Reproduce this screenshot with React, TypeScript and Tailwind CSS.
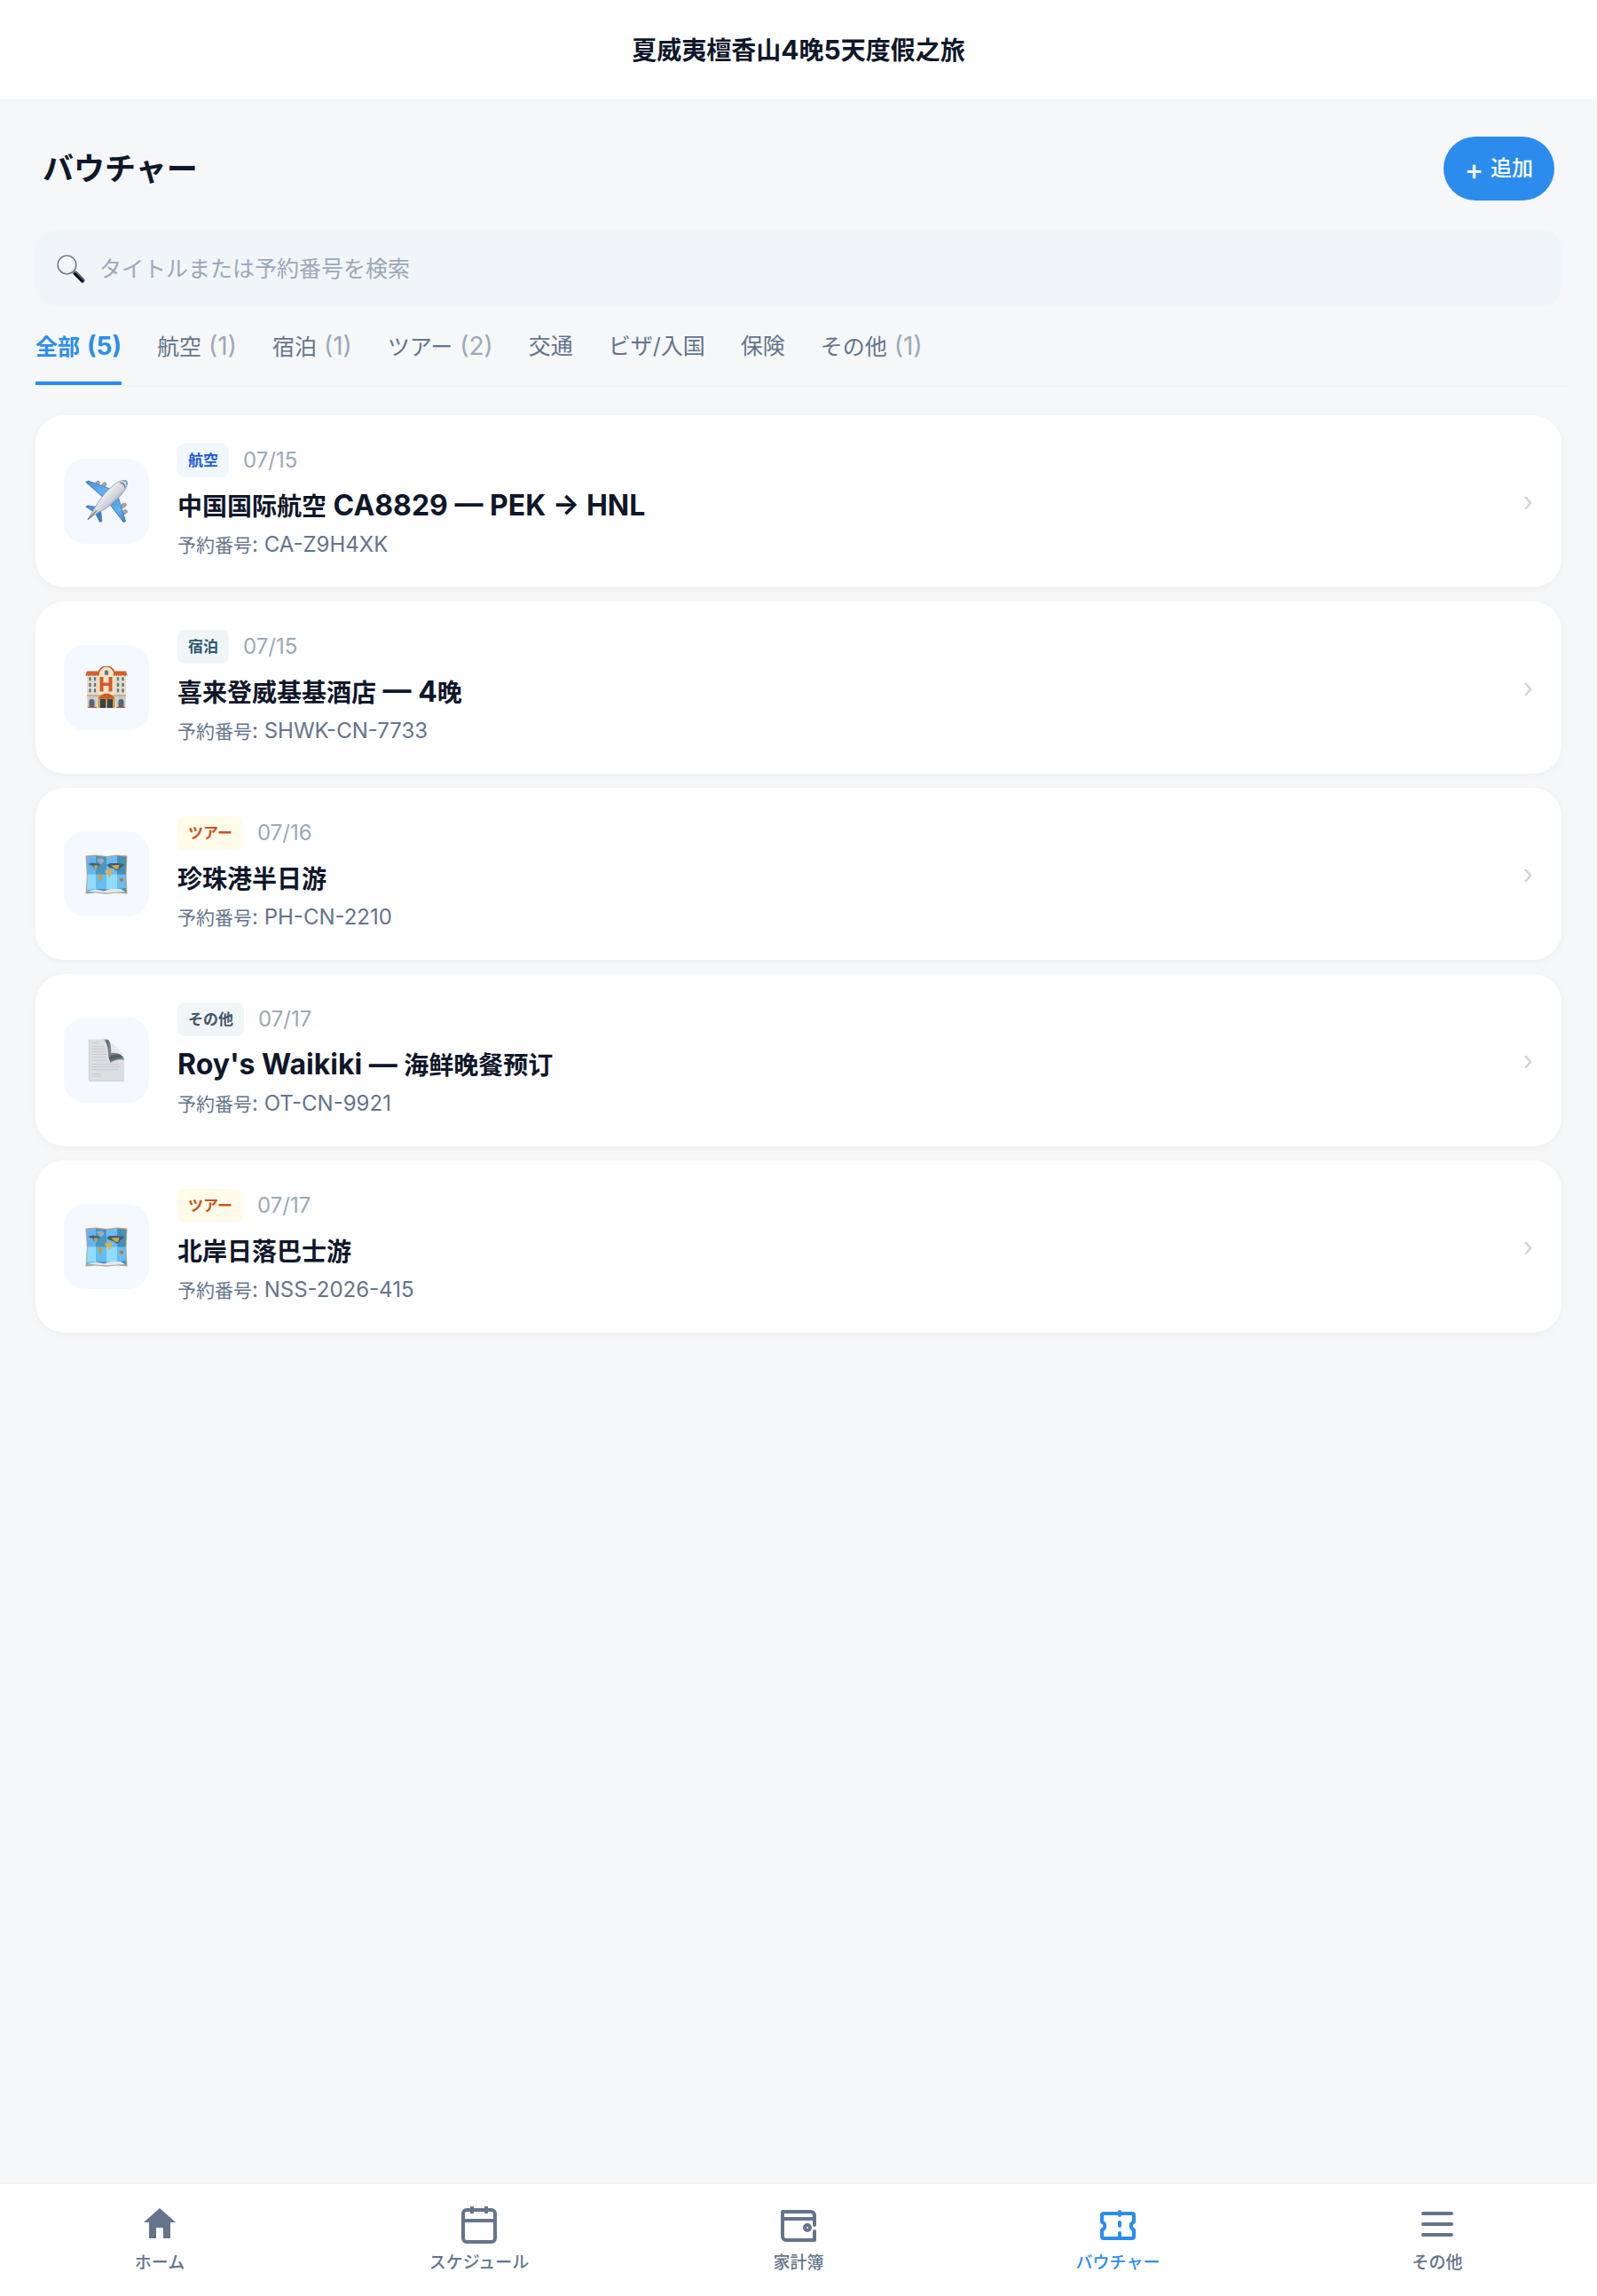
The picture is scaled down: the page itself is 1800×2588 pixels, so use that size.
import { useState } from 'react';
import type { ReactNode } from 'react';
import { clsx } from 'clsx';

type Category = 'flight' | 'stay' | 'tour' | 'other';

const TABS = [
  { id: 'all', label: '全部', count: 5 },
  { id: 'flight', label: '航空', count: 1 },
  { id: 'stay', label: '宿泊', count: 1 },
  { id: 'tour', label: 'ツアー', count: 2 },
  { id: 'transport', label: '交通', count: 0 },
  { id: 'visa', label: 'ビザ/入国', count: 0 },
  { id: 'insurance', label: '保険', count: 0 },
  { id: 'other', label: 'その他', count: 1 },
];

const VOUCHERS: { id: number; category: Category; date: string; title: string; code: string }[] = [
  { id: 1, category: 'flight', date: '07/15', title: '中国国际航空 CA8829 — PEK → HNL', code: 'CA-Z9H4XK' },
  { id: 2, category: 'stay', date: '07/15', title: '喜来登威基基酒店 — 4晚', code: 'SHWK-CN-7733' },
  { id: 3, category: 'tour', date: '07/16', title: '珍珠港半日游', code: 'PH-CN-2210' },
  { id: 4, category: 'other', date: '07/17', title: "Roy's Waikiki — 海鲜晚餐预订", code: 'OT-CN-9921' },
  { id: 5, category: 'tour', date: '07/17', title: '北岸日落巴士游', code: 'NSS-2026-415' },
];

const CATEGORY: Record<Category, { label: string; badge: string; icon: ReactNode }> = {
  flight: { label: '航空', badge: 'bg-[#f0f7fd] text-[#1a56db]', icon: <PlaneIcon /> },
  stay: { label: '宿泊', badge: 'bg-[#f0f6f8] text-[#2b5a70]', icon: <HotelIcon /> },
  tour: { label: 'ツアー', badge: 'bg-[#fefbe9] text-[#c8541c]', icon: <MapIcon /> },
  other: { label: 'その他', badge: 'bg-[#f0f6f8] text-[#475569]', icon: <DocIcon /> },
};

// Latin runs are set a little larger than the Han characters beside them
function MixedText({ text, latin }: { text: string; latin: string }) {
  return text.split(/([\u4e00-\u9fff]+)/).map((part, i) =>
    i % 2 === 0 ? (
      <span key={i} className={latin}>
        {part}
      </span>
    ) : (
      part
    ),
  );
}

function SearchGlyph() {
  return (
    <svg viewBox="0 0 32 32" className="size-8 shrink-0" aria-hidden="true">
      <defs>
        <linearGradient id="handle" x1="0" y1="1" x2="1" y2="0">
          <stop offset="0.3" stopColor="#0b1220" />
          <stop offset="0.55" stopColor="#8b97a3" />
          <stop offset="0.75" stopColor="#1f2937" />
        </linearGradient>
      </defs>
      <path d="M18 18l3 3" stroke="#6b7280" strokeWidth="2" />
      <path d="M21 21l8 8" stroke="url(#handle)" strokeWidth="5" strokeLinecap="round" />
      <path d="M20.5 21.5l8.5 8.5" stroke="#0b1220" strokeWidth="3" strokeLinecap="round" />
      <circle cx="11.5" cy="11.5" r="10.4" fill="#eceef2" stroke="#6b7684" strokeWidth="1.4" />
      <circle cx="11" cy="10.5" r="8" fill="#f7f7f9" opacity="0.8" />
    </svg>
  );
}

function PlaneIcon() {
  return (
    <svg viewBox="0 0 48 48" className="size-12" aria-hidden="true">
      <defs>
        <linearGradient id="fuselage" x1="0" y1="0" x2="1" y2="1">
          <stop offset="0.3" stopColor="#fbfbfd" />
          <stop offset="0.55" stopColor="#cfd0d8" />
          <stop offset="0.7" stopColor="#85868f" />
        </linearGradient>
        <linearGradient id="wing" x1="0" y1="0" x2="1" y2="1">
          <stop offset="0" stopColor="#3f8fdc" />
          <stop offset="0.6" stopColor="#5db3f7" />
          <stop offset="1" stopColor="#2b7fd0" />
        </linearGradient>
      </defs>
      <g fill="#a5a8b3" stroke="#6d717d" strokeWidth="0.6">
        <rect x="11.5" y="1" width="4" height="7" rx="1.6" transform="rotate(35 13.5 4.5)" />
        <rect x="19" y="2.5" width="4" height="7" rx="1.6" transform="rotate(35 21 6)" />
        <rect x="41" y="25.5" width="4" height="7" rx="1.6" transform="rotate(55 43 29)" />
        <rect x="42" y="33" width="4" height="7" rx="1.6" transform="rotate(55 44 36.5)" />
      </g>
      <path d="M0.7 2.4 3.5 1 31 11 24 23Z" fill="url(#wing)" stroke="#596b80" strokeWidth="0.8" />
      <path d="M45.6 46.5 43 47.5 25 24 36.5 17Z" fill="url(#wing)" stroke="#596b80" strokeWidth="0.8" />
      <path d="M0.8 30 3 28.8 15.5 31 11 37Z" fill="#3f95e6" stroke="#596b80" strokeWidth="0.8" />
      <path d="M18.8 46.6 16.5 47.4 11.5 37.5 17.5 33Z" fill="#2f83d6" stroke="#596b80" strokeWidth="0.8" />
      <path
        d="M3 44.5 10 33C17 20 26 9 37.5 2.2 41 .2 45.5 0 47 1.3 48.2 3 47.3 7 45.2 10.5 38 21.5 26.5 31.5 14.5 36.8Z"
        fill="url(#fuselage)"
        stroke="#8c8e99"
        strokeWidth="0.8"
      />
      <path d="M39.5 3.2C42.5 3 45 5.5 44.8 8.5" fill="none" stroke="#5a6b80" strokeWidth="1.4" />
      <path d="M43.5 1.2C46 .6 47.6 2.5 46.8 5.5" fill="none" stroke="#4a9be8" strokeWidth="1.2" />
      <path d="M3 44.5 13 34.5" stroke="#777b86" strokeWidth="1.2" />
    </svg>
  );
}

function HotelIcon() {
  return (
    <svg viewBox="0 0 48 48" className="size-12" aria-hidden="true">
      <rect x="2" y="8" width="44" height="39" fill="#ecd9bd" />
      <path d="M15 47V9a8.5 8.5 0 0 1 18 0v38Z" fill="#f3e3c8" />
      <path d="M15 9a8.7 8.7 0 0 1 18 0" fill="none" stroke="#c9582a" strokeWidth="1.6" />
      <path d="M2 5.5h14v4.5H.5Z" fill="#d5602c" />
      <path d="M46 5.5H32v4.5h15.5Z" fill="#d5602c" />
      <path d="M.5 10.3H16M32 10.3h15.5" stroke="#8f3f1f" strokeWidth="0.8" strokeDasharray="1.5 1" />
      <rect x="22" y="4.5" width="4" height="5.5" rx="1.5" fill="#49768f" stroke="#c9a26a" strokeWidth="0.6" />
      <path d="M16.5 12h4v6.5h6V12h4v16.5h-4v-6.5h-6v6.5h-4Z" fill="#cf5a2a" />
      <g fill="#4d7c96" stroke="#faf1e2" strokeWidth="0.5">
        {[12, 18.5, 25].map((y) =>
          [4, 9.5, 35.5, 41].map((x) => <rect key={`${x}-${y}`} x={x} y={y} width="3" height="4.8" />),
        )}
      </g>
      <path d="M2 33h44" stroke="#b9a68d" strokeWidth="1.4" />
      <rect x="3" y="34" width="10" height="12" fill="#c7ccd2" />
      <rect x="35" y="34" width="10" height="12" fill="#c7ccd2" />
      <path d="M4.5 46v-6a3 3 0 0 1 6 0v6ZM37.5 46v-6a3 3 0 0 1 6 0v6Z" fill="#536877" />
      <rect x="14.5" y="34" width="19" height="13" fill="#c79b43" />
      <rect x="17" y="37" width="6" height="10" fill="#344552" />
      <rect x="25" y="37" width="6" height="10" fill="#344552" />
      <path d="M15.5 36.5c1-4 5-5.7 8.5-5.7s7.5 1.7 8.5 5.7Z" fill="#cf5a2a" />
      <path d="M3 46.5h10M35 46.5h10" stroke="#c9582a" strokeWidth="1.2" />
    </svg>
  );
}

function MapIcon() {
  return (
    <svg viewBox="0 0 48 48" className="size-12" aria-hidden="true">
      <path d="M0.5 3.5 12 2.5 24 4 36 2.5 47.5 3.5 46.5 26 47.5 46.5 36 45.5 24 46.8 12 45.5.5 46.5 1.8 26Z" fill="#c9a27a" />
      <path d="M1.6 4.8 12 3.8V44.5L1.8 45.3 2.9 26Z" fill="#62b5f2" />
      <path d="M12 3.8 24 5V45.5L12 44.5Z" fill="#4a95c2" />
      <path d="M24 5 36 3.8V44.5L24 45.5Z" fill="#6bbcf5" />
      <path d="M36 3.8 46.4 4.8 45.5 26 46.3 45.3 36 44.5Z" fill="#458fb8" />
      <path d="M2.7 24.5H12V41l-9.9 1ZM24 24.5h12V41H24Z" fill="#8fdcff" />
      <path d="M12 24.5h12V41H12ZM36 24.5h9.5l.5 15.5-10 1Z" fill="#65bdf2" />
      <path d="M13 7 20 6.5 21.5 10 18 13.5 14.5 10.5Z" fill="#9aabb9" />
      <path d="M4 12.5 8 11.5 15.5 12.5 16.5 14 14 16.5 12.5 19.5 10 17.5 8 14.5 5 14Z" fill="#48606c" />
      <path d="M9.5 14.5 14.5 14.5 13 18.5 11.5 20Z" fill="#c0aa5a" />
      <path d="M14.5 24 17 24.5 20 27 18 30.5 16.5 34 15 29Z" fill="#bba34e" />
      <path d="M24 14.5 27.5 12 36 12 43.5 13 43 15 40 16.5 38 19.5 35 20.5 32 18 28 17Z" fill="#455a60" />
      <path d="M29 14.5 38.5 14 37.5 18.5 35 19 32 17Z" fill="#cbaa55" />
      <path d="M22.5 20 28.5 18.5 31 22.5 28.5 26.5 27 28.5 25.5 24.5 22.5 23Z" fill="#d3b258" />
      <path d="M38.5 29.5 41.5 28.5 43.5 31 41.5 33 39 31.5Z" fill="#cc6f3c" />
      <path d="M3 43.5 12 41.5 21 43.5 29 41 40 41 45.5 44.5 36 44.5 24 45.5 12 44.5Z" fill="#e4e8ee" />
    </svg>
  );
}

function DocIcon() {
  return (
    <svg viewBox="0 0 48 48" className="size-12" aria-hidden="true">
      <defs>
        <linearGradient id="curl" x1="0" y1="0" x2="1" y2="0">
          <stop offset="0" stopColor="#c9ced2" />
          <stop offset="0.5" stopColor="#5a686e" />
          <stop offset="1" stopColor="#8d989d" />
        </linearGradient>
        <linearGradient id="fold" x1="0" y1="0" x2="0.4" y2="1">
          <stop offset="0" stopColor="#8f999e" />
          <stop offset="0.5" stopColor="#46555c" />
          <stop offset="1" stopColor="#9aa3a8" />
        </linearGradient>
      </defs>
      <path d="M4 .5H22C27 1 29 6 29.5 15.5 37 15.5 43 18 44 24V47.5H4Z" fill="#dcdee2" />
      <path d="M4.4 47.2V.8M4 47.2h40" stroke="#c3c6cb" strokeWidth="0.8" />
      <path d="M26.5 1.5C31 6 38 11 43.500 18L29 16.500C29 10 28.500 5 26.500 1.500Z" fill="#e6e8ea" />
      <path d="M20 .5C24 3 26 9 26 18L29.500 16.500C29.500 9 28.500 3 26 1 24 .5 22 .5 20 .5Z" fill="url(#curl)" />
      <path d="M26 16.500C34 14.500 43 17 44 24 39 22.500 34 23.500 28.500 27 27 23 26 20 26 16.500Z" fill="url(#fold)" />
      <g stroke="#c6cad0" strokeWidth="1">
        <path d="M8 4.500h7M8 8.500h14M8 11.500h15M8 14.500h15M8 17.500h16M8 20.500h15M8 24h16" />
        <path d="M8 28.500h30M8 31.500h32M8 34.500h29M8 39.500h9M8 42h10" />
      </g>
    </svg>
  );
}

function NavSvg({ children, filled }: { children: ReactNode; filled?: boolean }) {
  return (
    <svg
      viewBox="0 0 24 24"
      className="size-12"
      fill={filled ? 'currentColor' : 'none'}
      stroke={filled ? 'none' : 'currentColor'}
      strokeWidth="2"
      aria-hidden="true"
    >
      {children}
    </svg>
  );
}

const NAV = [
  {
    label: 'ホーム',
    icon: (
      <NavSvg filled>
        <path d="M12 3 3 11h3v9h4v-6h4v6h4v-9h3z" />
      </NavSvg>
    ),
  },
  {
    label: 'スケジュール',
    icon: (
      <NavSvg>
        <rect x="3" y="4" width="18" height="18" rx="2" />
        <path d="M8 2v4M16 2v4M3 10h18" />
      </NavSvg>
    ),
  },
  {
    label: '家計簿',
    icon: (
      <NavSvg>
        <g strokeLinecap="round" strokeLinejoin="round">
          <path d="M21 12.5V7a2 2 0 0 0-2-2H3v14a2 2 0 0 0 2 2h16v-5" />
          <path d="M3 9h18" />
          <circle cx="17" cy="14" r="1.5" />
        </g>
      </NavSvg>
    ),
  },
  {
    label: 'バウチャー',
    active: true,
    icon: (
      <NavSvg>
        <g strokeLinecap="round" strokeLinejoin="round">
          <path d="M3 7a1 1 0 0 1 1-1h16a1 1 0 0 1 1 1v3.8a2.3 2.3 0 0 0 0 4.4V19a1 1 0 0 1-1 1H4a1 1 0 0 1-1-1v-3.8a2.3 2.3 0 0 0 0-4.4z" />
          <path d="M13 5v2M13 11v2M13 17v2" />
        </g>
      </NavSvg>
    ),
  },
  {
    label: 'その他',
    icon: (
      <NavSvg>
        <path d="M4 6h16M4 12h16M4 18h16" strokeLinecap="round" />
      </NavSvg>
    ),
  },
];

export default function App() {
  const [tab, setTab] = useState('all');
  const [query, setQuery] = useState('');

  const visible = VOUCHERS.filter(
    (v) => (tab === 'all' || v.category === tab) && (v.title + v.code).toLowerCase().includes(query.toLowerCase()),
  );

  return (
    <div
      lang="ja"
      className="flex min-h-screen flex-col bg-[#f5f7f9] font-['Inter','Noto_Sans_CJK_JP','Noto_Sans_CJK_SC',sans-serif] text-[#0f172a]"
    >
      <header className="flex h-[114px] items-center justify-center border-b-2 border-[#f0f6f8] bg-white">
        <p className="text-[28px] leading-10 font-bold">
          <MixedText text="夏威夷檀香山4晚5天度假之旅" latin="text-[30px]" />
        </p>
      </header>

      <main className="flex-1 px-10 pt-10">
        <div className="flex items-center justify-between px-2">
          <h1 className="text-[35px] leading-12 font-bold">バウチャー</h1>
          <button
            type="button"
            className="flex h-18 items-center gap-2 rounded-full bg-[#2b8cee] px-6 text-2xl font-medium text-white"
          >
            <span className="pt-1 text-[32px] leading-8">+</span>
            追加
          </button>
        </div>

        <label className="mt-8 flex h-22 items-center gap-4 rounded-3xl bg-[#f0f6f8] px-6 pt-0.5">
          <SearchGlyph />
          <input
            type="text"
            value={query}
            onChange={(e) => setQuery(e.target.value)}
            aria-label="検索"
            placeholder="タイトルまたは予約番号を検索"
            className="min-w-0 flex-1 bg-transparent text-[25px] leading-10 outline-none placeholder:text-[#9ca8b8]"
          />
        </label>

        {/* Category tabs */}
        <div role="tablist" className="-mx-2 flex h-[90px] gap-10 border-b-2 border-[#f0f6f8] px-2">
          {TABS.map((t) => (
            <button
              key={t.id}
              type="button"
              role="tab"
              aria-selected={tab === t.id}
              onClick={() => setTab(t.id)}
              className={clsx(
                'flex items-baseline gap-2 border-b-4 pt-6 text-[25px] leading-10 whitespace-nowrap',
                tab === t.id ? 'border-[#2b8cee] font-bold text-[#2b8cee]' : 'border-transparent text-[#64748b]',
              )}
            >
              {t.label}
              {t.count > 0 && (
                <span className={clsx('text-[28px]', tab !== t.id && 'text-[#9ca8b8]')}>({t.count})</span>
              )}
            </button>
          ))}
        </div>

        {/* Voucher cards */}
        <ul className="mt-8 flex flex-col gap-4 pb-10">
          {visible.map((v) => {
            const category = CATEGORY[v.category];
            return (
              <li key={v.id}>
                <button
                  type="button"
                  className="flex w-full items-center gap-8 rounded-[32px] bg-white p-8 text-left shadow-[0_2px_8px_rgba(15,23,42,0.04)]"
                >
                  <span className="flex size-24 shrink-0 items-center justify-center rounded-3xl bg-[#f3f9ff]">
                    {category.icon}
                  </span>
                  <span className="flex min-w-0 flex-1 flex-col">
                    <span className="flex items-center gap-4">
                      <span className={clsx('rounded-lg px-3 text-[17px] leading-[38px] font-bold', category.badge)}>
                        {category.label}
                      </span>
                      <span className="text-2xl leading-8 text-[#9ca8b8]">{v.date}</span>
                    </span>
                    <span className="mt-2 h-12 truncate text-[28px] leading-12 font-bold">
                      <MixedText text={v.title} latin="text-[32px]" />
                    </span>
                    <span className="mt-1 h-8 text-[21px] leading-8 text-[#64748b]">
                      予約番号<span className="text-2xl leading-8">: {v.code}</span>
                    </span>
                  </span>
                  <span className="text-[30px] leading-8 text-[#d1d5db]">›</span>
                </button>
              </li>
            );
          })}
        </ul>
      </main>

      <nav className="grid h-32 grid-cols-5 border-t-2 border-[#f0f6f8] bg-white pt-[21px]">
        {NAV.map((item) => (
          <a
            key={item.label}
            href="#"
            className={clsx(
              'flex flex-col items-center gap-2 text-[19px] leading-6 font-medium',
              item.active ? 'text-[#2b8cee]' : 'text-[#64748b]',
            )}
          >
            {item.icon}
            {item.label}
          </a>
        ))}
      </nav>
    </div>
  );
}
